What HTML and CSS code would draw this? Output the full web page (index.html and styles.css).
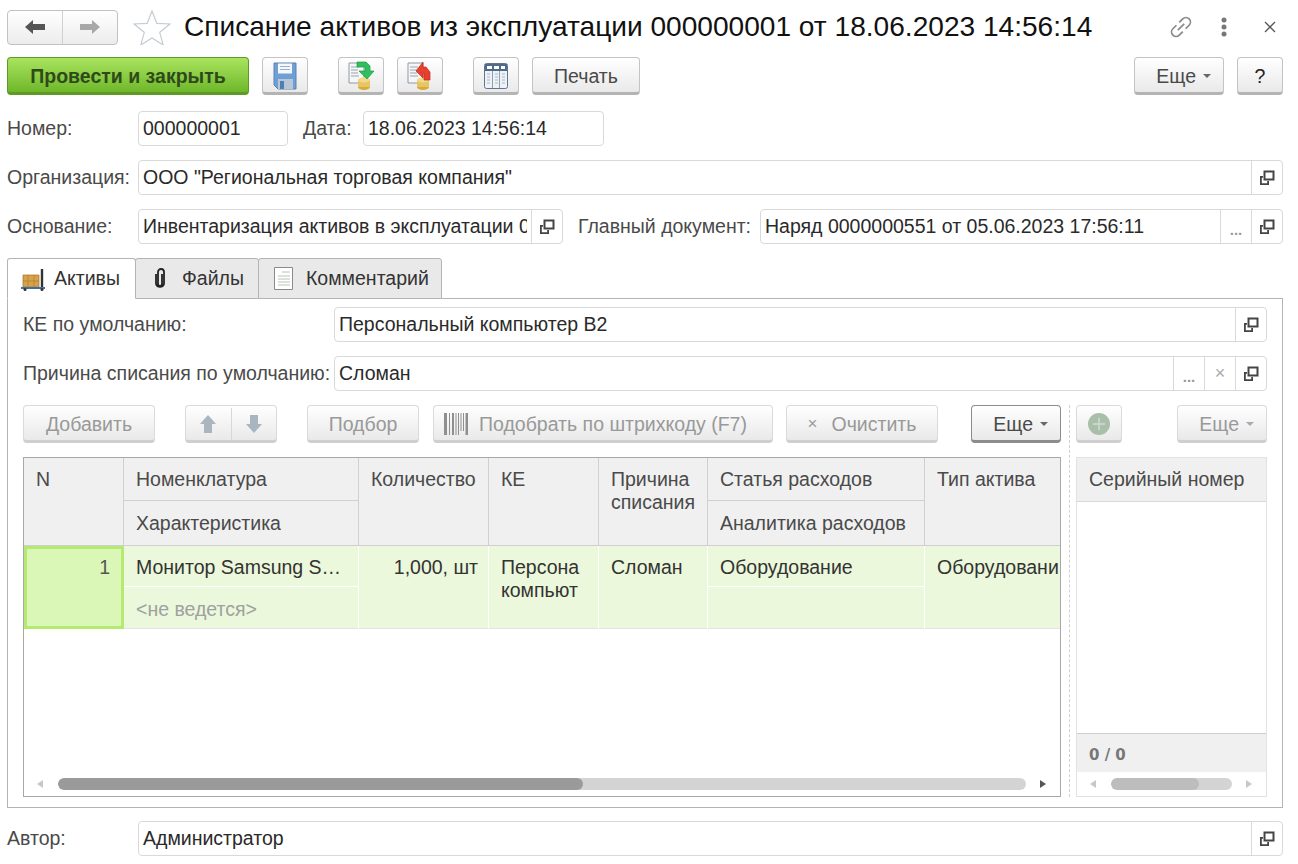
FILE: index.html
```html
<!DOCTYPE html>
<html lang="ru">
<head>
    <meta charset="UTF-8">
    <title>Списание активов из эксплуатации</title>
    <link rel="stylesheet" href="styles.css">
</head>
<body>
    <svg class="defs" width="0" height="0">
        <symbol id="open" viewBox="0 0 16 16">
            <path d="M5.500 1.500h9v8h-9z" fill="none" stroke="#444" stroke-width="2"/>
            <path d="M1 6h3v1.800H2.800v5.400h5.400V11H10v4H1z" fill="#444"/>
        </symbol>
    </svg>

    <!-- Title bar -->
    <header class="title-bar">
        <div class="nav-group">
            <button class="nav-btn">
                <svg width="22" height="16" viewBox="0 0 22 16"><path d="M1 8l8-7v4h12v6H9v4z" fill="#555"/></svg>
            </button>
            <button class="nav-btn">
                <svg width="22" height="16" viewBox="0 0 22 16"><path d="M21 8l-8-7v4H1v6h12v4z" fill="#a8a8a8"/></svg>
            </button>
        </div>
        <svg class="star" width="38" height="36" viewBox="0 0 38 36">
            <path d="M19 2l4.800 12.300 13.200.7-10.300 8.300 3.500 12.700L19 29l-11.200 7 3.500-12.700L1 15l13.200-.7z" fill="#fff" stroke="#c5ccd2" stroke-width="1.200"/>
        </svg>
        <h1 class="title">Списание активов из эксплуатации 000000001 от 18.06.2023 14:56:14</h1>
        <div class="window-icons">
            <svg width="26" height="26" viewBox="0 0 26 26" fill="none" stroke="#8a8a8a" stroke-width="1.700">
                <g transform="rotate(-45 13 13)">
                    <path d="M11 8.500H6a4.500 4.500 0 0 0 0 9h5"/>
                    <path d="M15 8.500h5a4.500 4.500 0 0 1 0 9h-5"/>
                    <path d="M8.500 13h9"/>
                </g>
            </svg>
            <svg class="dots" width="6" height="20" viewBox="0 0 6 20" fill="#777">
                <circle cx="3" cy="3" r="2.500"/><circle cx="3" cy="10" r="2.500"/><circle cx="3" cy="17" r="2.500"/>
            </svg>
            <svg class="close" width="12" height="12" viewBox="0 0 12 12" stroke="#555" stroke-width="1.300">
                <path d="M1 1l10 10M11 1L1 11"/>
            </svg>
        </div>
    </header>

    <!-- Command bar -->
    <div class="command-bar">
        <button class="btn btn-primary">Провести и закрыть</button>
        <button class="btn btn-icon cmd-save">
            <svg width="24" height="28" viewBox="0 0 24 28">
                <path d="M1 1h22v26H5l-4-4z" fill="#6f9fd6" stroke="#5a82b0"/>
                <path d="M5 1.500h14v10H5z" fill="#f4f7fb"/>
                <path d="M7 4.500h10M7 7.500h10" stroke="#9ab0c8"/>
                <path d="M5 17h15v10H5z" fill="#b9c6d4"/>
                <path d="M7 19h4v8H7z" fill="#4d7fb5"/>
            </svg>
        </button>
        <button class="btn btn-icon cmd-post">
            <svg width="28" height="30" viewBox="0 0 28 30">
                <path d="M2 2h15v20H2z" fill="#f6f6f6" stroke="#8d9aaa"/>
                <path d="M4 6h8M4 9h7M4 12h7M4 15h8" stroke="#9aa5b1"/>
                <ellipse cx="17" cy="26" rx="6" ry="3" fill="#d9a93c"/>
                <path d="M11 19h12v7H11z" fill="#e7c562"/>
                <ellipse cx="17" cy="19" rx="6" ry="2.500" fill="#f0d98a"/>
                <path d="M10 1h9l4 4v5h4l-7 8-8-8h6V6h-8z" fill="#2fbf5d" stroke="#1c9a48" stroke-width=".7"/>
            </svg>
        </button>
        <button class="btn btn-icon cmd-unpost">
            <svg width="28" height="30" viewBox="0 0 28 30">
                <path d="M2 2h15v20H2z" fill="#f6f6f6" stroke="#8d9aaa"/>
                <path d="M4 6h8M4 9h7M4 12h7M4 15h8" stroke="#9aa5b1"/>
                <ellipse cx="17" cy="26" rx="6" ry="3" fill="#d9a93c"/>
                <path d="M11 19h12v7H11z" fill="#e7c562"/>
                <ellipse cx="17" cy="19" rx="6" ry="2.500" fill="#f0d98a"/>
                <path d="M10 10l7-9v5h3l4 5v8h-6v-7h-1v5z" fill="#e8402f" stroke="#c22c20" stroke-width=".7"/>
            </svg>
        </button>
        <button class="btn btn-icon cmd-table">
            <svg width="26" height="28" viewBox="0 0 26 28">
                <rect x="1.500" y="1.500" width="23" height="25" rx="2" fill="#eef2f6" stroke="#60768f"/>
                <path d="M2 2h22v7H2z" fill="#4f6b8c"/>
                <path d="M4 4h5v3H4zM11 4h5v3h-5zM18 4h4v3h-4z" fill="#fff"/>
                <path d="M9.500 9v17M16.500 9v17" stroke="#8ea0b4"/>
                <path d="M4 12h3M4 15h3M4 18h3M4 21h3M12 12h3M12 15h3M12 18h3M12 21h3M19 12h3M19 15h3M19 18h3M19 21h3" stroke="#aab6c3"/>
            </svg>
        </button>
        <button class="btn cmd-print">Печать</button>
        <button class="btn btn-more cmd-more">Еще <span class="caret"></span></button>
        <button class="btn btn-icon cmd-help">?</button>
    </div>

    <!-- Document fields -->
    <div class="form-row row-number">
        <label class="label label-main">Номер:</label>
        <div class="field field-number"><span class="value">000000001</span></div>
        <label class="label label-date">Дата:</label>
        <div class="field field-date"><span class="value">18.06.2023 14:56:14</span></div>
    </div>
    <div class="form-row">
        <label class="label label-main">Организация:</label>
        <div class="field field-grow">
            <span class="value">ООО "Региональная торговая компания"</span>
            <span class="field-btn"><svg width="16" height="16"><use href="#open"/></svg></span>
        </div>
    </div>
    <div class="form-row">
        <label class="label label-main">Основание:</label>
        <div class="field field-base">
            <span class="value">Инвентаризация активов в эксплуатации 0</span>
            <span class="field-btn"><svg width="16" height="16"><use href="#open"/></svg></span>
        </div>
        <label class="label label-parent">Главный документ:</label>
        <div class="field field-grow">
            <span class="value">Наряд 0000000551 от 05.06.2023 17:56:11</span>
            <span class="field-btn dots-btn">...</span>
            <span class="field-btn"><svg width="16" height="16"><use href="#open"/></svg></span>
        </div>
    </div>

    <!-- Tabs -->
    <div class="tabs">
        <div class="tab tab-active tab-assets">
            <svg width="26" height="24" viewBox="0 0 26 24">
                <path d="M2 8h16v12H2z" fill="#d8a24a" stroke="#a8742a" stroke-width=".7"/>
                <path d="M7 8v12M13 8v12M2 14h16" stroke="#b5802f" stroke-width=".8"/>
                <path d="M21 2v19" stroke="#333" stroke-width="2.400"/>
                <path d="M0 20h24v2H0z" fill="#3f6f9f"/>
                <circle cx="4" cy="22.500" r="1.500" fill="#333"/><circle cx="21" cy="22.500" r="1.500" fill="#333"/>
            </svg>
            Активы
        </div>
        <div class="tab tab-files">
            <svg width="12" height="22" viewBox="0 0 12 22" fill="none" stroke="#222" stroke-width="1.800">
                <path d="M8 6v10a2 2 0 0 1-4 0V4a3 3 0 0 1 6 0v12a4.200 4.200 0 0 1-8 0V6"/>
            </svg>
            Файлы
        </div>
        <div class="tab tab-comment">
            <svg width="20" height="24" viewBox="0 0 20 24">
                <path d="M.5.500h18v22H.5z" fill="#fff" stroke="#8a8a8a"/>
                <path d="M8 5h8M4 9h12M4 12h12M4 15h12M4 18h12" stroke="#bcc4b8"/>
            </svg>
            Комментарий
        </div>
    </div>

    <div class="tab-panel">
        <div class="panel-row">
            <label class="label label-panel">КЕ по умолчанию:</label>
            <div class="field field-grow">
                <span class="value">Персональный компьютер B2</span>
                <span class="field-btn"><svg width="16" height="16"><use href="#open"/></svg></span>
            </div>
        </div>
        <div class="panel-row">
            <label class="label label-panel">Причина списания по умолчанию:</label>
            <div class="field field-grow">
                <span class="value">Сломан</span>
                <span class="field-btn dots-btn">...</span>
                <span class="field-btn clear-btn">×</span>
                <span class="field-btn"><svg width="16" height="16"><use href="#open"/></svg></span>
            </div>
        </div>

        <div class="split">
            <!-- Left: assets table -->
            <div class="split-main">
                <div class="table-bar">
                    <button class="btn off bar-add">Добавить</button>
                    <div class="btn off bar-arrows">
                        <span class="arrow-cell">
                            <svg width="18" height="20" viewBox="0 0 18 20"><path d="M9 1l8 9h-4v9H5v-9H1z" fill="#a9b5bf"/></svg>
                        </span>
                        <span class="arrow-cell">
                            <svg width="18" height="20" viewBox="0 0 18 20"><path d="M9 19l8-9h-4V1H5v9H1z" fill="#a9b5bf"/></svg>
                        </span>
                    </div>
                    <button class="btn off bar-pick">Подбор</button>
                    <button class="btn off bar-barcode">
                        <svg width="24" height="24" viewBox="0 0 24 24" fill="#8f8f8f">
                            <path d="M0 1h3v22H0zM5 1h1v22H5zM8 1h2v22H8zM11.500 1h1v22h-1zM14 1h1v22h-1zM16.500 1h1v18h-1zM19 1h1v18h-1zM21.500 1h2.500v22h-2.500z"/>
                        </svg>
                        Подобрать по штрихкоду (F7)
                    </button>
                    <button class="btn off bar-clear"><span class="clear-x">×</span> Очистить</button>
                    <button class="btn btn-more btn-focus bar-more">Еще <span class="caret"></span></button>
                </div>

                <div class="table">
                    <div class="grid">
                        <div class="th th-tall">N</div>
                        <div class="th">Номенклатура</div>
                        <div class="th th-tall">Количество</div>
                        <div class="th th-tall">КЕ</div>
                        <div class="th th-tall th-wrap">Причина списания</div>
                        <div class="th">Статья расходов</div>
                        <div class="th th-tall th-last">Тип актива</div>
                        <div class="th th-sub">Характеристика</div>
                        <div class="th th-sub">Аналитика расходов</div>

                        <div class="td td-tall td-num">1</div>
                        <div class="td">Монитор Samsung S…</div>
                        <div class="td td-tall td-qty">1,000, шт</div>
                        <div class="td td-tall td-wrap">Персона<br>компьют</div>
                        <div class="td td-tall">Сломан</div>
                        <div class="td">Оборудование</div>
                        <div class="td td-tall td-last">Оборудовани</div>
                        <div class="td td-end td-muted">&lt;не ведется&gt;</div>
                        <div class="td td-end"></div>
                    </div>
                    <div class="scroll scroll-main">
                        <span class="scroll-arrow arrow-left off-arrow"></span>
                        <div class="scroll-track"><div class="scroll-thumb"></div></div>
                        <span class="scroll-arrow arrow-right"></span>
                    </div>
                </div>
            </div>

            <!-- Right: serial numbers -->
            <div class="split-side">
                <div class="table-bar">
                    <button class="btn off side-add">
                        <svg width="24" height="24" viewBox="0 0 24 24">
                            <circle cx="12" cy="12" r="11" fill="#a9bfa9"/>
                            <path d="M12 6v12M6 12h12" stroke="#c8d6c8" stroke-width="2"/>
                        </svg>
                    </button>
                    <button class="btn btn-more off side-more">Еще <span class="caret"></span></button>
                </div>
                <div class="side-table">
                    <div class="side-head">Серийный номер</div>
                    <div class="side-body"></div>
                    <div class="side-foot">0 / 0</div>
                    <div class="scroll scroll-side">
                        <span class="scroll-arrow arrow-left off-arrow"></span>
                        <div class="scroll-track"><div class="scroll-thumb"></div></div>
                        <span class="scroll-arrow arrow-right off-arrow"></span>
                    </div>
                </div>
            </div>
        </div>
    </div>

    <div class="form-row row-author">
        <label class="label label-main">Автор:</label>
        <div class="field field-grow">
            <span class="value">Администратор</span>
            <span class="field-btn"><svg width="16" height="16"><use href="#open"/></svg></span>
        </div>
    </div>
</body>
</html>
```

FILE: styles.css
```css
/* Reset styles */
* {
    margin: 0;
    padding: 0;
    box-sizing: border-box;
}

body {
    font-family: "Liberation Sans", Arial, sans-serif;
    font-size: 19.5px;
    color: #4a4a4a;
    background: #fff;
    width: 1298px;
    height: 864px;
    overflow: hidden;
    padding: 0 15px 0 7px;
}

.defs {
    position: absolute;
}

/* Title bar */
.title-bar {
    display: flex;
    align-items: center;
    height: 36px;
    margin-top: 9px;
}

.nav-group {
    display: flex;
    width: 111px;
    height: 35px;
    border: 1px solid #c2c2c2;
    border-radius: 4px;
    background: linear-gradient(#fff, #ececec);
}

.nav-btn {
    flex: 1;
    border: none;
    background: none;
    display: flex;
    align-items: center;
    justify-content: center;
}

.nav-btn + .nav-btn {
    border-left: 1px solid #d0d0d0;
}

.star {
    margin-left: 15px;
}

.title {
    margin-left: 13px;
    font-size: 28.1px;
    font-weight: normal;
    color: #111;
    white-space: nowrap;
}

.window-icons {
    margin-left: auto;
    display: flex;
    align-items: center;
}

.dots {
    margin-left: 27px;
}

.close {
    margin-left: 37px;
    margin-right: 7px;
}

/* Buttons */
.btn {
    height: 38px;
    padding-top: 2px;
    border: 1px solid #c4c4c4;
    border-bottom: 3px solid #b4b4b4;
    border-radius: 4px;
    background: linear-gradient(#fff, #e9e9e9);
    font-family: inherit;
    font-size: 19.5px;
    color: #4a4a4a;
    display: flex;
    align-items: center;
    justify-content: center;
    flex-shrink: 0;
    white-space: nowrap;
}

.btn-primary {
    width: 242px;
    background: linear-gradient(#a9e45e, #6fb72b);
    border: 1px solid #5f9a28;
    border-bottom: 3px solid #5f9a28;
    font-weight: bold;
    color: #2f4a1a;
}

.btn-icon {
    width: 46px;
}

.btn-more {
    width: 90px;
    justify-content: flex-end;
    padding-right: 12px;
    gap: 7px;
}

.caret {
    width: 0;
    height: 0;
    border-left: 4px solid transparent;
    border-right: 4px solid transparent;
    border-top: 4px solid #666;
}

.btn.off {
    color: #999;
    border-color: #dadada;
    border-bottom-color: #cfcfcf;
}

.off .caret {
    border-top-color: #aaa;
}

.btn-focus {
    border-color: #8c8c8c;
    border-bottom-color: #8c8c8c;
}

/* Command bar */
.command-bar {
    display: flex;
    margin-top: 12px;
}

.cmd-save { margin-left: 13px; }
.cmd-post { margin-left: 30px; }
.cmd-unpost { margin-left: 13px; }
.cmd-table { margin-left: 30px; }
.cmd-print { margin-left: 13px; width: 108px; }
.cmd-more { margin-left: auto; }
.cmd-help { margin-left: 13px; color: #222; }

/* Form rows */
.form-row {
    display: flex;
    align-items: center;
    height: 35px;
    margin-top: 14px;
}

.row-number {
    margin-top: 16px;
}

.row-author {
    margin-top: 13px;
}

.label {
    white-space: nowrap;
}

.label-main {
    width: 131px;
    flex-shrink: 0;
}

.label-date {
    width: 75px;
    padding-left: 15px;
}

.label-parent {
    width: 197px;
    flex-shrink: 0;
    padding-left: 15px;
}

.field {
    display: flex;
    align-items: stretch;
    height: 35px;
    border: 1px solid #d9d9d9;
    border-radius: 4px;
    background: #fff;
    overflow: hidden;
}

.value {
    flex: 1;
    min-width: 0;
    padding-left: 4px;
    line-height: 33px;
    color: #2a2a2a;
    white-space: nowrap;
    overflow: hidden;
}

.field-number { width: 150px; }
.field-date { width: 241px; }
.field-base { width: 425px; }
.field-base .value { margin-right: 4px; }
.field-grow { flex: 1; min-width: 0; }

.field-btn {
    width: 31px;
    flex-shrink: 0;
    border-left: 1px solid #d9d9d9;
    display: flex;
    align-items: center;
    justify-content: center;
}

.dots-btn {
    color: #999;
    font-weight: bold;
    font-size: 15px;
    padding-top: 6px;
}

.clear-btn {
    color: #aaa;
    font-size: 18px;
}

/* Tabs */
.tabs {
    display: flex;
    height: 41px;
    margin-top: 14px;
    position: relative;
}

.tab {
    display: flex;
    align-items: center;
    border: 1px solid #b4b4b4;
    border-radius: 3px 3px 0 0;
    background: #e9e9e9;
    color: #333;
    margin-left: -1px;
}

.tab-active {
    background: #fff;
    border-bottom-color: #fff;
    margin-left: 0;
    position: relative;
    z-index: 1;
}

.tab-assets { width: 129px; padding-left: 13px; gap: 7px; }
.tab-files { width: 124px; padding-left: 18px; gap: 16px; }
.tab-comment { width: 184px; padding-left: 15px; gap: 12px; }

.tab-panel {
    height: 510px;
    margin-top: -1px;
    border: 1px solid #b4b4b4;
    padding: 8px 15px 0;
}

.panel-row {
    display: flex;
    align-items: center;
    height: 35px;
    margin-bottom: 14px;
}

.panel-row .label-panel {
    width: 311px;
    flex-shrink: 0;
}

/* Split with tables */
.split {
    display: flex;
}

.split-main {
    width: 1038px;
}

.split-side {
    width: 198px;
    margin-left: 8px;
    padding-left: 6px;
    border-left: 1px dashed #d0d0d0;
}

.table-bar {
    display: flex;
    height: 39px;
}

.bar-add { width: 132px; }
.bar-arrows { width: 92px; margin-left: 30px; }
.bar-pick { width: 112px; margin-left: 30px; }
.bar-barcode {
    width: 340px;
    margin-left: 14px;
    gap: 11px;
    justify-content: flex-start;
    padding-left: 10px;
}
.bar-clear { width: 152px; margin-left: 13px; gap: 14px; }
.bar-more { margin-left: 33px; }

.clear-x {
    font-size: 17px;
}

.arrow-cell {
    flex: 1;
    height: 100%;
    display: flex;
    align-items: center;
    justify-content: center;
}

.arrow-cell + .arrow-cell {
    border-left: 1px solid #d8d8d8;
}

.side-add { width: 46px; }
.side-more { margin-left: auto; }

/* Main table */
.table {
    height: 340px;
    margin-top: 13px;
    border: 1px solid #a8a8a8;
    display: flex;
    flex-direction: column;
    overflow: hidden;
}

.grid {
    display: grid;
    grid-template-columns: 100px 235px 130px 110px 109px 217px 136px;
    grid-template-rows: 43px 45px 41px 42px;
    flex: 1;
    align-content: start;
    overflow: hidden;
    min-height: 0;
}

.th,
.td {
    padding: 10px 12px 0;
    white-space: nowrap;
    overflow: hidden;
    line-height: 23px;
}

.th {
    background: #f0f0f0;
    color: #4a4a4a;
    border-right: 1px solid #d0d0d0;
    border-bottom: 1px solid #d0d0d0;
}

.th-sub {
    padding-top: 11px;
}

.th-tall {
    grid-row: span 2;
}

.th-wrap {
    white-space: normal;
}

.td {
    background: #ebf8db;
    color: #333;
    border-right: 1px solid #fff;
    border-bottom: 1px solid #fff;
}

.td-tall {
    grid-row: span 2;
    border-bottom-color: #e4e4e4;
}

.td-end {
    padding-top: 11px;
    border-bottom-color: #e4e4e4;
}

.td-num {
    background: #dbf7b8;
    border: 3px solid #b5ea70;
    text-align: right;
    padding: 7px 11px 0 0;
    color: #555;
}

.td-qty {
    text-align: right;
    padding-right: 10px;
}

.td-muted {
    color: #a0a0a0;
}

.th-last,
.td-last {
    border-right: none;
    padding-right: 0;
}

/* Scrollbars */
.scroll {
    display: flex;
    align-items: center;
    flex-shrink: 0;
    height: 24px;
}

.scroll-track {
    height: 12px;
    border-radius: 6px;
    background: #d4d4d4;
    overflow: hidden;
}

.scroll-thumb {
    height: 100%;
    border-radius: 6px;
}

.scroll-main .scroll-track {
    width: 968px;
    margin-left: 15px;
}

.scroll-main .scroll-thumb {
    width: 525px;
    background: #9a9a9a;
}

.scroll-side .scroll-track {
    width: 121px;
    margin-left: 15px;
}

.scroll-side .scroll-thumb {
    width: 88px;
    background: #bdbdbd;
}

.scroll-arrow {
    width: 0;
    height: 0;
    border-top: 4px solid transparent;
    border-bottom: 4px solid transparent;
}

.arrow-left {
    margin-left: 13px;
    border-right: 6px solid #666;
}

.arrow-right {
    margin-left: 14px;
    border-left: 6px solid #555;
}

.arrow-left.off-arrow {
    border-right-color: #c8c8c8;
}

.arrow-right.off-arrow {
    border-left-color: #c8c8c8;
}

/* Serial number table */
.side-table {
    height: 340px;
    margin-top: 13px;
    border: 1px solid #e2e2e2;
    display: flex;
    flex-direction: column;
}

.side-head {
    height: 44px;
    padding: 10px 12px 0;
    line-height: 23px;
    background: #f0f0f0;
    border-bottom: 1px solid #d8d8d8;
}

.side-body {
    flex: 1;
}

.side-foot {
    height: 39px;
    padding: 11px 12px 0;
    line-height: 20px;
    background: #f0f0f0;
    border-top: 1px solid #cfcfcf;
    font-family: "DejaVu Sans", sans-serif;
    font-size: 15px;
    font-weight: bold;
    color: #777;
}
```
